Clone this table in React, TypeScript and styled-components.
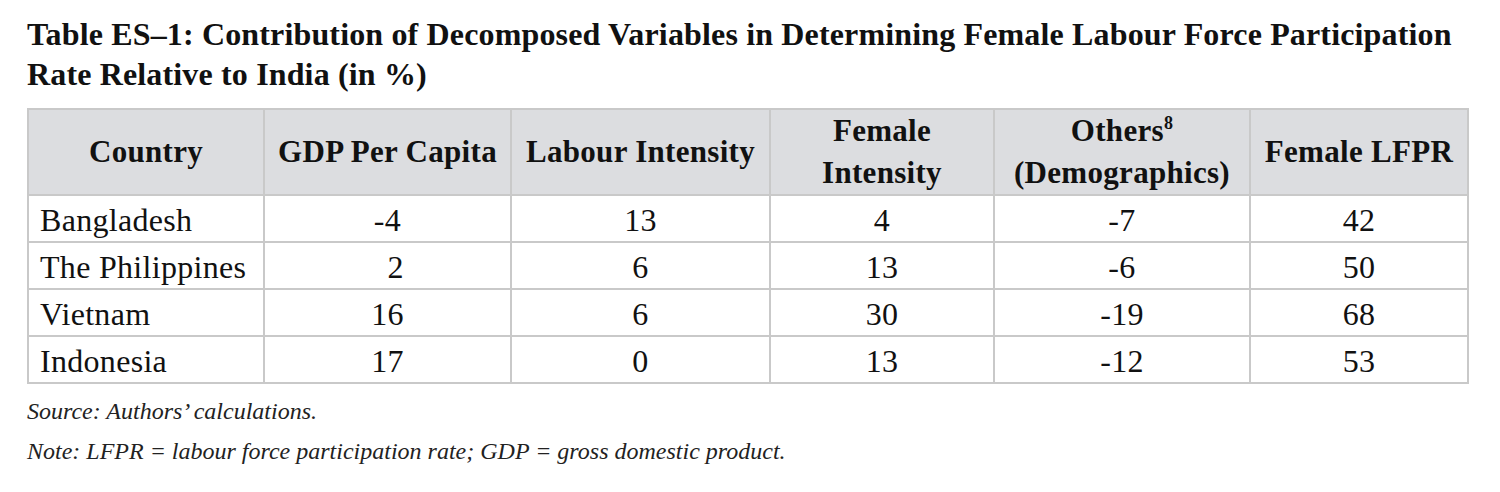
import styled, { createGlobalStyle } from "styled-components";

const Global = createGlobalStyle`
  body {
    margin: 0;
    background: #ffffff;
    font-family: "Liberation Serif", "Times New Roman", serif;
    color: #111111;
  }
`;

const Page = styled.div`
  padding: 14px 0 0 27px;
  width: 1440px;
`;

const Title = styled.h1`
  margin: 0 0 14px;
  font-size: 32px;
  line-height: 40px;
  letter-spacing: 0.15px;
  font-weight: 700;
  color: #111111;
  white-space: nowrap;
`;

const Table = styled.table`
  width: 1440px;
  border-collapse: collapse;
  table-layout: fixed;
  border: 2px solid #c9c9c9;
`;

const Col = styled.col<{ $w: number }>`
  width: ${(p) => p.$w}px;
`;

const Head = styled.th`
  box-sizing: border-box;
  height: 86px;
  background: #dcdde0;
  border: 2px solid #c9c9c9;
  font-size: 31px;
  line-height: 42px;
  letter-spacing: 0.3px;
  font-weight: 700;
  text-align: center;
  padding: 0 4px;
  vertical-align: middle;
  white-space: nowrap;
`;

const Sup = styled.sup`
  font-size: 18px;
  line-height: 1;
  vertical-align: top;
  position: relative;
  top: 4px;
`;

const Cell = styled.td<{ $left?: boolean }>`
  box-sizing: border-box;
  height: 47px;
  border: 2px solid #c9c9c9;
  font-size: 32px;
  line-height: 34px;
  letter-spacing: 0.3px;
  text-align: ${(p) => (p.$left ? "left" : "center")};
  padding: 2px ${(p) => (p.$left ? "11px" : "4px")} 0;
  white-space: pre;
`;

const Note = styled.p`
  margin: 0;
  font-style: italic;
  font-size: 24px;
  line-height: 40px;
  color: #222222;
`;

const Notes = styled.div`
  margin-top: 7px;
`;

const widths = [236, 247, 259, 224, 256, 218];

const rows: [string, string, string, string, string, string][] = [
  ["Bangladesh", "-4", "13", "4", "-7", "42"],
  ["The Philippines", "\u20072", "6", "13", "-6", "50"],
  ["Vietnam", "16", "6", "30", "-19", "68"],
  ["Indonesia", "17", "0", "13", "-12", "53"],
];

export default function App() {
  return (
    <Page>
      <Global />
      <Title>
        Table ES–1: Contribution of Decomposed Variables in Determining Female Labour Force Participation
        <br />
        Rate Relative to India (in %)
      </Title>
      <Table>
        <colgroup>
          {widths.map((w, i) => (
            <Col key={i} $w={w} />
          ))}
        </colgroup>
        <thead>
          <tr>
            <Head>Country</Head>
            <Head>GDP Per Capita</Head>
            <Head>Labour Intensity</Head>
            <Head>
              Female
              <br />
              Intensity
            </Head>
            <Head>
              Others<Sup>8</Sup>
              <br />
              (Demographics)
            </Head>
            <Head>Female LFPR</Head>
          </tr>
        </thead>
        <tbody>
          {rows.map((r) => (
            <tr key={r[0]}>
              {r.map((v, i) => (
                <Cell key={i} $left={i === 0}>
                  {v}
                </Cell>
              ))}
            </tr>
          ))}
        </tbody>
      </Table>
      <Notes>
        <Note>Source: Authors’ calculations.</Note>
        <Note>Note: LFPR = labour force participation rate; GDP = gross domestic product.</Note>
      </Notes>
    </Page>
  );
}
